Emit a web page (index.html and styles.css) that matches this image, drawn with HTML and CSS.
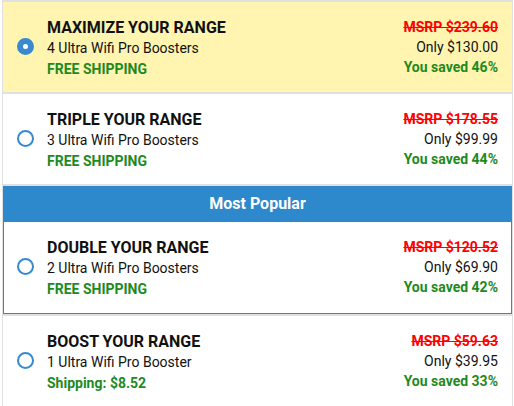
FILE: index.html
```html
<!DOCTYPE html>
<html lang="en">
<head>
  <meta charset="UTF-8">
  <title>Choose your package</title>
  <link rel="stylesheet" href="styles.css">
</head>
<body>
  <div class="paquetes">
    <label class="paquete seleccionado">
      <span class="radio"></span>
      <div class="paquete-info">
        <div class="paquete-titulo">MAXIMIZE YOUR RANGE</div>
        <div class="paquete-cantidad">4 Ultra Wifi Pro Boosters</div>
        <div class="paquete-envio">FREE SHIPPING</div>
      </div>
      <div class="paquete-precio">
        <div class="precio-msrp">MSRP $239.60</div>
        <div class="precio-oferta">Only $130.00</div>
        <div class="precio-ahorro">You saved 46%</div>
      </div>
    </label>

    <label class="paquete">
      <span class="radio"></span>
      <div class="paquete-info">
        <div class="paquete-titulo">TRIPLE YOUR RANGE</div>
        <div class="paquete-cantidad">3 Ultra Wifi Pro Boosters</div>
        <div class="paquete-envio">FREE SHIPPING</div>
      </div>
      <div class="paquete-precio">
        <div class="precio-msrp">MSRP $178.55</div>
        <div class="precio-oferta">Only $99.99</div>
        <div class="precio-ahorro">You saved 44%</div>
      </div>
    </label>

    <div class="popular">
      <div class="popular-cabecera">Most Popular</div>
      <label class="paquete">
        <span class="radio"></span>
        <div class="paquete-info">
          <div class="paquete-titulo">DOUBLE YOUR RANGE</div>
          <div class="paquete-cantidad">2 Ultra Wifi Pro Boosters</div>
          <div class="paquete-envio">FREE SHIPPING</div>
        </div>
        <div class="paquete-precio">
          <div class="precio-msrp">MSRP $120.52</div>
          <div class="precio-oferta">Only $69.90</div>
          <div class="precio-ahorro">You saved 42%</div>
        </div>
      </label>
    </div>

    <label class="paquete">
      <span class="radio"></span>
      <div class="paquete-info">
        <div class="paquete-titulo">BOOST YOUR RANGE</div>
        <div class="paquete-cantidad">1 Ultra Wifi Pro Booster</div>
        <div class="paquete-envio">Shipping: $8.52</div>
      </div>
      <div class="paquete-precio">
        <div class="precio-msrp">MSRP $59.63</div>
        <div class="precio-oferta">Only $39.95</div>
        <div class="precio-ahorro">You saved 33%</div>
      </div>
    </label>
  </div>
</body>
</html>
```

FILE: styles.css
```css
* {
  margin: 0;
  padding: 0;
  box-sizing: border-box;
}
body {
  background: #fff;
  font-family: Roboto, 'Liberation Sans', sans-serif;
  color: #111;
}
.paquetes {
  margin-left: 2px;
  width: 511px;
  border-left: 1px solid #e0e0e0;
  border-right: 1px solid #e0e0e0;
  border-bottom: 2px solid #e0e0e0;
}
.paquete {
  display: flex;
  align-items: center;
  height: 92px;
  padding: 0 14px 0 14px;
  border-top: 2px solid #e0e0e0;
  cursor: pointer;
}
.paquete.seleccionado {
  background: #fff5b1;
}
.radio {
  flex: none;
  width: 17px;
  height: 17px;
  margin-right: 13px;
  margin-bottom: 2px;
  border: 2px solid #3a89cf;
  border-radius: 50%;
  background: #fff;
}
.seleccionado .radio {
  border: 6px solid #3a89cf;
}
.paquete-info {
  flex: 1;
  padding-top: 2px;
  font-size: 14px;
  line-height: 21px;
}
.paquete-titulo {
  font-size: 16px;
  font-weight: bold;
}
.paquete-envio {
  color: #1e8a1e;
  font-weight: bold;
}
.paquete-precio {
  text-align: right;
  font-size: 14px;
  line-height: 20px;
  margin-bottom: 1px;
}
.precio-msrp {
  color: #ff0000;
  font-weight: bold;
  text-decoration: line-through;
}
.precio-ahorro {
  color: #1e8a1e;
  font-weight: bold;
}
.popular {
  border-top: 2px solid #e0e0e0;
}
.popular-cabecera {
  height: 36px;
  line-height: 36px;
  background: #2e88cc;
  color: #fff;
  font-size: 16px;
  font-weight: bold;
  text-align: center;
}
.popular .paquete {
  height: 92px;
  padding-left: 13px;
  padding-right: 13px;
  border: 1px solid #2e88cc;
  border-top: none;
}
```
